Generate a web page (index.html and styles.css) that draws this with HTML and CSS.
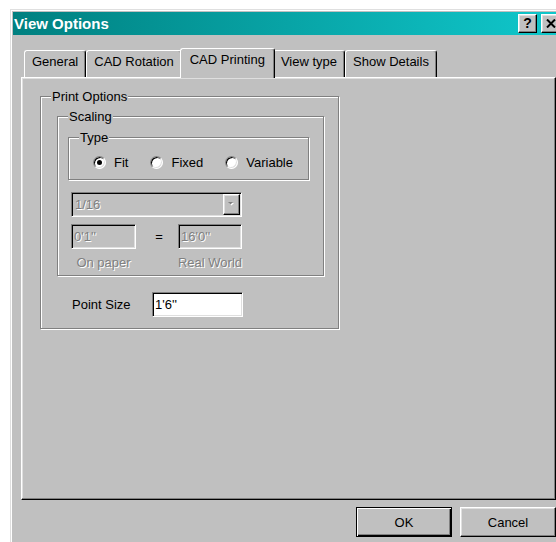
FILE: index.html
```html
<!DOCTYPE html>
<html lang="en">
<head>
<meta charset="utf-8">
<title>View Options</title>
<link rel="stylesheet" href="styles.css">
</head>
<body>
<div class="window">
  <div class="titlebar">
    <span class="title">View Options</span>
    <span class="tb-btn help">?</span>
    <span class="tb-btn close">
      <svg width="10" height="9" viewBox="0 0 10 9"><path d="M1 0.5 L9 8.5 M9 0.5 L1 8.5" stroke="#000" stroke-width="2" fill="none"/></svg>
    </span>
  </div>
  <div class="content">
    <div class="tabs">
      <div class="tab">General</div>
      <div class="tab">CAD Rotation</div>
      <div class="tab active">CAD Printing</div>
      <div class="tab">View type</div>
      <div class="tab">Show Details</div>
    </div>
    <div class="panel">
      <div class="group print-options">
        <span class="group-label">Print Options</span>
        <div class="group scaling">
          <span class="group-label">Scaling</span>
          <div class="group type">
            <span class="group-label">Type</span>
            <div class="radios">
              <span class="radio-item"><span class="radio checked"></span>Fit</span>
              <span class="radio-item"><span class="radio"></span>Fixed</span>
              <span class="radio-item"><span class="radio"></span>Variable</span>
            </div>
          </div>
          <div class="combo">
            <span class="combo-value disabled-text">1/16</span>
            <span class="combo-btn">
              <svg width="7" height="5" viewBox="0 0 7 5"><path d="M1 1 H6 L3.5 3.5 Z" fill="#fff"/><path d="M0 0 H5 L2.5 2.5 Z" fill="#808080"/></svg>
            </span>
          </div>
          <div class="ratio">
            <div class="ratio-col paper">
              <div class="edit disabled-text">0'1''</div>
              <div class="caption disabled-text">On paper</div>
            </div>
            <div class="equals">=</div>
            <div class="ratio-col world">
              <div class="edit disabled-text">16'0''</div>
              <div class="caption disabled-text">Real World</div>
            </div>
          </div>
        </div>
        <div class="point-size">
          <span class="field-label">Point Size</span>
          <div class="edit enabled">1'6''</div>
        </div>
      </div>
    </div>
    <div class="buttons">
      <button class="btn default">OK</button>
      <button class="btn">Cancel</button>
    </div>
  </div>
</div>
</body>
</html>
```
FILE: styles.css
```css
* { box-sizing: border-box; }

html, body { margin: 0; }

body {
  background: #fff;
  padding: 9px 0 0 10px;
  height: 542px;
  overflow: hidden;
  font-family: "Liberation Sans", Arial, sans-serif;
  font-size: 13px;
  line-height: 15px;
  color: #000;
}

/* dialog frame */
.window {
  width: 557px;
  height: 560px;
  background: #c0c0c0;
  border: 1px solid;
  border-color: #dfdfdf #000 #000 #dfdfdf;
  box-shadow: inset 1px 1px #fff, inset -1px -1px #808080;
  padding: 2px;
}

.titlebar {
  height: 23px;
  display: flex;
  align-items: center;
  padding: 0 4px 0 1px;
  background: linear-gradient(to right, #008080, #10c8cc);
}

.title {
  flex: 1;
  color: #fff;
  font-weight: bold;
  font-size: 15px;
}

.tb-btn {
  width: 19px;
  height: 19px;
  display: flex;
  align-items: center;
  justify-content: center;
  background: #c0c0c0;
  border: 1px solid;
  border-color: #fff #000 #000 #fff;
  box-shadow: inset -1px -1px #808080, inset 1px 1px #dfdfdf;
}

.tb-btn.help {
  margin-right: 4px;
  font-weight: bold;
  font-size: 14px;
}

.content {
  padding: 13px 8px 0;
}

/* tab strip */
.tabs {
  display: flex;
  align-items: flex-end;
  height: 30px;
  padding-left: 3px;
  margin-bottom: -1px;
  position: relative;
  z-index: 1;
}

.tab {
  height: 27px;
  margin-bottom: 1px;
  padding: 3px 7px 0;
  background: #c0c0c0;
  border: 1px solid;
  border-bottom: 0;
  border-color: #fff #000 #000 #fff;
  border-radius: 3px 3px 0 0;
  box-shadow: inset -1px 0 #808080;
  white-space: nowrap;
}

.tab.active {
  height: 30px;
  margin: 0 -2px;
  padding: 3px 9px 0;
  position: relative;
  z-index: 2;
}

.panel {
  height: 423px;
  padding: 18px 0 0 18px;
  border: 1px solid;
  border-color: #fff #000 #000 #fff;
  box-shadow: inset -1px -1px #808080, inset 1px 1px #dfdfdf;
}

/* etched group boxes */
.group {
  position: relative;
  border: 1px solid #808080;
  box-shadow: inset 1px 1px #fff, 1px 1px #fff;
}

.group-label {
  position: absolute;
  top: -8px;
  left: 10px;
  padding: 0 1px;
  background: #c0c0c0;
  line-height: 15px;
}

.print-options {
  width: 299px;
  height: 233px;
  padding: 19px 0 0 16px;
}

.scaling {
  width: 267px;
  height: 160px;
  padding: 20px 0 0 10px;
}

.type {
  width: 241px;
  height: 43px;
  padding: 17px 0 0 24px;
}

.radios {
  display: flex;
  align-items: center;
  gap: 22px;
}

.radio-item {
  display: flex;
  align-items: center;
  gap: 8px;
}

.radio {
  width: 13px;
  height: 13px;
  border-radius: 50%;
  background: #fff;
  border: 1px solid;
  border-color: #808080 #fff #fff #808080;
  box-shadow: inset 1px 1px #000, inset -1px -1px #dfdfdf;
  display: flex;
  align-items: center;
  justify-content: center;
}

.radio.checked::after {
  content: "";
  width: 5px;
  height: 5px;
  border-radius: 50%;
  background: #000;
}

.disabled-text {
  color: #808080;
  text-shadow: 1px 1px 0 #fff;
}

/* sunken fields */
.combo,
.edit {
  height: 25px;
  border: 1px solid;
  border-color: #808080 #fff #fff #808080;
  box-shadow: inset 1px 1px #000, inset -1px -1px #dfdfdf;
}

.combo {
  width: 171px;
  margin: 12px 0 0 3px;
  display: flex;
  align-items: center;
  justify-content: space-between;
  padding: 2px 1px 2px 3px;
}

.combo-btn {
  width: 17px;
  height: 21px;
  display: flex;
  align-items: center;
  justify-content: center;
  border: 1px solid;
  border-color: #fff #000 #000 #fff;
  box-shadow: inset -1px -1px #808080, inset 1px 1px #dfdfdf;
  background: #c0c0c0;
}

.edit {
  padding: 4px 0 0 2px;
  white-space: nowrap;
}

.ratio {
  display: flex;
  align-items: flex-start;
  margin: 7px 0 0 3px;
}

.ratio-col {
  display: flex;
  flex-direction: column;
  align-items: center;
}

.ratio-col .edit { width: 100%; }
.paper { width: 65px; }
.world { width: 64px; }

.equals {
  width: 42px;
  padding-left: 4px;
  text-align: center;
  line-height: 25px;
}

.caption {
  margin-top: 6px;
  white-space: nowrap;
}

.point-size {
  display: flex;
  align-items: center;
  margin: 16px 0 0 15px;
}

.field-label {
  width: 80px;
}

.edit.enabled {
  width: 91px;
  background: #fff;
}

/* dialog buttons */
.buttons {
  display: flex;
  justify-content: flex-end;
  gap: 8px;
  margin-top: 7px;
}

.btn {
  width: 96px;
  height: 30px;
  font: inherit;
  color: #000;
  background: #c0c0c0;
  border: 1px solid;
  border-color: #fff #000 #000 #fff;
  box-shadow: inset -1px -1px #808080, inset 1px 1px #dfdfdf;
  padding: 0;
}

.btn.default {
  border-color: #000;
  box-shadow: inset 1px 1px #fff, inset -1px -1px #000, inset -2px -2px #808080;
}
```
